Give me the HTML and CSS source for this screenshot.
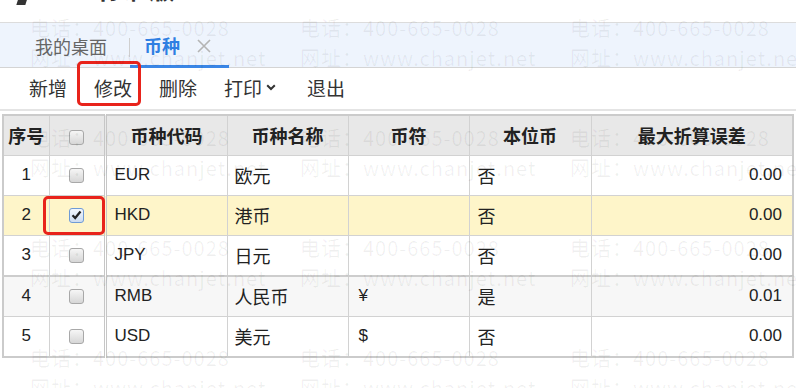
FILE: index.html
```html
<!DOCTYPE html>
<html lang="zh-CN">
<head>
  <meta charset="UTF-8" />
  <meta name="viewport" content="width=device-width, initial-scale=1.0" />
  <title>币种</title>
  <link rel="stylesheet" href="styles.css">
</head>
<body>
  <div class="page">
    <header class="titlebar">
      <span class="logo"></span>
      <span class="product">T+标准版</span>
      <span class="account">[001]测试账套</span>
      <span class="period">(2018-01-01)</span>
    </header>

    <nav class="tabs">
      <span class="tab">我的桌面</span>
      <span class="tab-sep"></span>
      <span class="tab active">币种
        <svg class="close" width="14" height="14" viewBox="0 0 14 14"><path d="M1 1L13 13M13 1L1 13" stroke="#b4b4b4" stroke-width="1.6" fill="none"/></svg>
      </span>
    </nav>

    <div class="toolbar">
      <button class="tool">新增</button>
      <button class="tool marked">修改<span class="mark mark-edit"></span></button>
      <button class="tool">删除</button>
      <button class="tool">打印<svg class="caret" width="10" height="7" viewBox="0 0 10 7"><path d="M1.2 1.2L5 5L8.8 1.2" stroke="#333" stroke-width="2" fill="none"/></svg></button>
      <button class="tool">退出</button>
    </div>

    <table class="grid">
      <colgroup>
        <col style="width:46px"><col style="width:56px"><col style="width:122px"><col style="width:121px"><col style="width:121px"><col style="width:122px"><col style="width:202px">
      </colgroup>
      <thead>
        <tr>
          <th>序号</th>
          <th class="sel"><span class="cb"></span></th>
          <th>币种代码</th>
          <th>币种名称</th>
          <th>币符</th>
          <th>本位币</th>
          <th>最大折算误差</th>
        </tr>
      </thead>
      <tbody>
        <tr>
          <td class="no">1</td><td class="sel"><span class="cb"></span></td><td class="code">EUR</td><td class="name">欧元</td><td class="sym"></td><td class="base">否</td><td class="num">0.00</td>
        </tr>
        <tr class="current">
          <td class="no">2</td><td class="sel"><span class="cb checked"><svg width="11" height="10" viewBox="0 0 11 10"><path d="M1.5 5.2L4.2 8L9.5 1.5" stroke="#222" stroke-width="2.2" fill="none"/></svg></span><span class="mark mark-check"></span></td><td class="code">HKD</td><td class="name">港币</td><td class="sym"></td><td class="base">否</td><td class="num">0.00</td>
        </tr>
        <tr>
          <td class="no">3</td><td class="sel"><span class="cb"></span></td><td class="code">JPY</td><td class="name">日元</td><td class="sym"></td><td class="base">否</td><td class="num">0.00</td>
        </tr>
        <tr class="alt">
          <td class="no">4</td><td class="sel"><span class="cb"></span></td><td class="code">RMB</td><td class="name">人民币</td><td class="sym">¥</td><td class="base">是</td><td class="num">0.01</td>
        </tr>
        <tr>
          <td class="no">5</td><td class="sel"><span class="cb"></span></td><td class="code">USD</td><td class="name">美元</td><td class="sym">$</td><td class="base">否</td><td class="num">0.00</td>
        </tr>
      </tbody>
    </table>

    <!-- watermark over the whole page -->
    <div class="watermark">
      <div class="wm"><p>电话：400-665-0028</p><p>网址：www.chanjet.net</p></div>
      <div class="wm"><p>电话：400-665-0028</p><p>网址：www.chanjet.net</p></div>
      <div class="wm"><p>电话：400-665-0028</p><p>网址：www.chanjet.net</p></div>
      <div class="wm"><p>电话：400-665-0028</p><p>网址：www.chanjet.net</p></div>
      <div class="wm"><p>电话：400-665-0028</p><p>网址：www.chanjet.net</p></div>
      <div class="wm"><p>电话：400-665-0028</p><p>网址：www.chanjet.net</p></div>
      <div class="wm"><p>电话：400-665-0028</p><p>网址：www.chanjet.net</p></div>
      <div class="wm"><p>电话：400-665-0028</p><p>网址：www.chanjet.net</p></div>
      <div class="wm"><p>电话：400-665-0028</p><p>网址：www.chanjet.net</p></div>
      <div class="wm"><p>电话：400-665-0028</p><p>网址：www.chanjet.net</p></div>
      <div class="wm"><p>电话：400-665-0028</p><p>网址：www.chanjet.net</p></div>
      <div class="wm"><p>电话：400-665-0028</p><p>网址：www.chanjet.net</p></div>
    </div>
  </div>
</body>
</html>
```

FILE: styles.css
```css
body {
  margin: 0;
  font-family: "Liberation Sans", "Noto Sans CJK SC", sans-serif;
  color: #222;
  background: #fff;
}
.page {
  position: relative;
  width: 796px;
  height: 388px;
  overflow: hidden;
}

/* title bar, mostly scrolled out of view */
.titlebar {
  height: 22px;
  overflow: hidden;
  display: flex;
  align-items: flex-start;
  border-bottom: 1px solid #dcdcdc;
}
.titlebar span {
  margin-top: -24px;
  line-height: 28px;
}
.logo {
  width: 9px;
  height: 29px;
  margin-left: 21px;
  background: #333;
  transform: skewX(-18deg);
}
.product {
  margin-left: 36px;
  font-size: 26px;
  font-weight: bold;
  color: #333;
}
.account {
  margin-left: 28px;
  font-size: 19px;
  color: #666;
}
.period {
  margin-left: 34px;
  font-size: 19px;
  color: #666;
}

/* tabs */
.tabs {
  height: 44px;
  display: flex;
  align-items: stretch;
  padding-left: 35px;
  background: #eef4fd;
  border-bottom: 1px solid #d4d4d4;
  font-family: "Noto Sans CJK SC", sans-serif;
  font-size: 18px;
}
.tab {
  display: flex;
  align-items: center;
  color: #666;
  padding-top: 2px;
}
.tab-sep {
  width: 1px;
  height: 19px;
  margin: 15px 0 0 22px;
  background: #cfcfcf;
}
.tab.active {
  width: 85px;
  padding-left: 14px;
  color: #2f7fe2;
  font-weight: bold;
  border-bottom: 3px solid #3a86e6;
  margin-bottom: -1px;
}
.close {
  margin-left: 17px;
  margin-top: 1px;
}

/* toolbar */
.toolbar {
  height: 41px;
  display: flex;
  align-items: center;
  padding-left: 15px;
  border-bottom: 2px solid #e4e4e4;
}
.tool {
  position: relative;
  border: 0;
  background: none;
  padding: 0 13px 3px 14px;
  height: 41px;
  font-family: "Noto Sans CJK SC", sans-serif;
  font-size: 19px;
  color: #333;
  display: flex;
  align-items: center;
}
.caret {
  margin-left: 4px;
  margin-right: 4px;
}

/* red annotation frames */
.mark {
  position: absolute;
  border: 3px solid #e8231b;
  border-radius: 5px;
  pointer-events: none;
}
.mark-edit {
  left: -3px;
  top: -7px;
  width: 58px;
  height: 39px;
}
.mark-check {
  left: -7px;
  top: 0;
  width: 56px;
  height: 33px;
}

/* grid */
.grid {
  margin: 3px 0 0 2px;
  width: 790px;
  table-layout: fixed;
  border-collapse: collapse;
  border: 2px solid #cbcbcb;
  font-size: 17px;
}
.grid th,
.grid td {
  height: 37px;
  padding: 0 0 2px;
  border: 1px solid #d2d2d2;
  white-space: nowrap;
}
.grid th {
  background: #e8e8e8;
  font-family: "Noto Sans CJK SC", sans-serif;
  font-size: 18px;
  font-weight: bold;
  color: #222;
  text-align: center;
}
.grid .sel {
  position: relative;
  text-align: center;
  border-right: 3px double #c6c6c6;
}
.grid td.no {
  text-align: center;
}
.grid td.code {
  padding-left: 8px;
}
.grid td.name {
  padding-left: 7px;
  font-family: "Noto Sans CJK SC", sans-serif;
  font-size: 18px;
}
.grid td.sym {
  padding-left: 10px;
}
.grid td.base {
  padding-left: 8px;
  font-family: "Noto Sans CJK SC", sans-serif;
  font-size: 18px;
}
.grid td.num {
  text-align: right;
  padding-right: 10px;
}
.grid tr.current td {
  background: #fef5c9;
}
.grid tr.alt td {
  background: #f7f7f7;
}
.grid tbody tr:nth-child(3) td {
  border-bottom: 2px solid #cdcdcd;
}

.cb {
  display: inline-block;
  width: 13px;
  height: 13px;
  vertical-align: middle;
  border: 1px solid #a8a8a8;
  border-radius: 3px;
  background: linear-gradient(#f6f6f6, #d6d6d6);
}
.cb.checked {
  border-color: #6f9bd6;
  background: linear-gradient(#f3f7fc, #cddcf0);
  display: inline-flex;
  align-items: center;
  justify-content: center;
}

/* watermark layer */
.watermark {
  position: absolute;
  top: 13px;
  left: 30px;
  display: grid;
  grid-template-columns: repeat(3, 270px);
  grid-auto-rows: 110px;
  pointer-events: none;
  font-family: "Noto Sans CJK SC", sans-serif;
  font-size: 20px;
  letter-spacing: 1px;
  color: rgba(0, 0, 0, 0.06);
}
.wm p {
  margin: 0;
  line-height: 30px;
  white-space: nowrap;
}
```
